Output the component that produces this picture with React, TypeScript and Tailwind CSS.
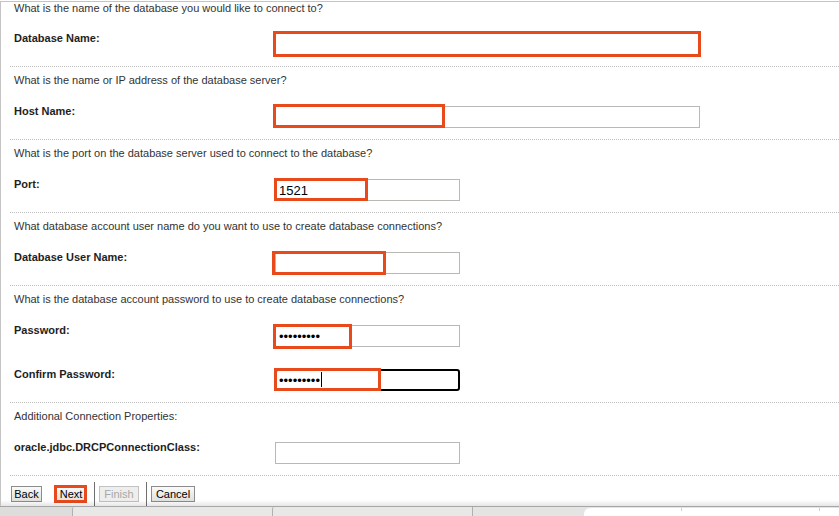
import React from "react"

type Field = {
  label: string
  wide?: boolean
  value?: string
  type?: string
  focused?: boolean
  hl?: string
  gap?: boolean
}

type Section = {
  question: string
  fields: Field[]
}

const sections: Section[] = [
  {
    question: "What is the name of the database you would like to connect to?",
    fields: [{ label: "Database Name:", wide: true, hl: "-left-[2px] -top-[2px] w-[428px] h-[26px]" }],
  },
  {
    question: "What is the name or IP address of the database server?",
    fields: [{ label: "Host Name:", wide: true, hl: "-left-[2px] -top-[2px] w-[172px] h-[24px]" }],
  },
  {
    question: "What is the port on the database server used to connect to the database?",
    fields: [{ label: "Port:", value: "1521", hl: "-left-[1px] -top-[1px] w-[94px] h-[23px]" }],
  },
  {
    question: "What database account user name do you want to use to create database connections?",
    fields: [{ label: "Database User Name:", hl: "-left-[3px] -top-[1px] w-[114px] h-[24px]" }],
  },
  {
    question: "What is the database account password to use to create database connections?",
    fields: [
      { label: "Password:", type: "password", value: "123456789", hl: "-left-[2px] -top-[1px] w-[79px] h-[25px]" },
      {
        label: "Confirm Password:",
        type: "password",
        value: "123456789",
        focused: true,
        gap: true,
        hl: "-left-[1px] -top-[1px] w-[107px] h-[23px]",
      },
    ],
  },
  {
    question: "Additional Connection Properties:",
    fields: [{ label: "oracle.jdbc.DRCPConnectionClass:" }],
  },
]

function FieldRow({ f }: { f: Field }) {
  return (
    <div className={`grid grid-cols-[261px_1fr] ${f.gap ? "mt-[22px]" : ""}`}>
      <div className="text-[11px] leading-[11px] font-bold text-[#1e1e1e]">{f.label}</div>
      <div className={`relative h-[22px] ${f.wide ? "w-[425px]" : "w-[185px]"}`}>
        <input
          readOnly
          type={f.type || "text"}
          value={f.value || ""}
          className={
            f.focused
              ? "block w-full h-full border-2 border-black rounded-[3px] pl-[2px] text-[13px] text-black outline-none bg-white"
              : "block w-full h-full border border-[#b8b8b4] pl-[3px] text-[13px] text-black outline-none bg-white"
          }
        />
        {f.focused && <span className="absolute left-[46px] top-[3px] w-px h-[15px] bg-black" />}
        {f.hl && <span className={`absolute border-[3px] border-[#e84a1c] pointer-events-none ${f.hl}`} />}
      </div>
    </div>
  )
}

const btn =
  "block h-[16px] border border-[#8c8c8c] bg-linear-to-b from-[#fafaf8] to-[#e0e0dc] text-[11px] leading-[14px] text-black"

export default function App() {
  return (
    <div className="h-[516px] w-full bg-white pt-px flex flex-col overflow-hidden font-['Liberation_Sans',Arial,sans-serif]">
      <div className="relative flex-1 border-l border-t border-[#c4c4c4] flex flex-col">
        <div className="ml-[9px]">
          {sections.map((s, i) => (
            <div
              key={i}
              className={
                i === 0
                  ? "-mt-[1px] px-[4px] pb-[11px]"
                  : "border-t border-dotted border-[#bdbdbd] px-[4px] pt-[6px] pb-[11px]"
              }
            >
              <div className="text-[11px] leading-[14px] text-[#333]">{s.question}</div>
              <div className={i === 0 ? "mt-[18px]" : "mt-[19px]"}>
                {s.fields.map((f) => (
                  <FieldRow key={f.label} f={f} />
                ))}
              </div>
            </div>
          ))}

          {/* wizard buttons */}
          <div className="border-t border-dotted border-[#bdbdbd] pt-[6px] flex items-start">
            <button className={`ml-px mt-[4px] w-[31px] ${btn}`}>Back</button>
            <div className="relative ml-[14px] mt-[4px]">
              <button className={`w-[30px] ${btn}`}>Next</button>
              <span className="absolute -left-[2px] -top-[1px] w-[33px] h-[18px] border-[3px] border-[#e84a1c]" />
            </div>
            <div className="ml-[8px] w-px h-[24px] bg-[#6f6f6f]" />
            <button
              disabled
              className="block ml-[4px] mt-[4px] w-[40px] h-[16px] border border-[#c2c2c2] bg-[#eeeeec] text-[11px] leading-[14px] text-[#a8a8a8]"
            >
              Finish
            </button>
            <div className="ml-[7px] w-px h-[24px] bg-[#6f6f6f]" />
            <button className={`ml-[4px] mt-[4px] w-[44px] ${btn}`}>Cancel</button>
          </div>
        </div>
        <div className="pointer-events-none absolute left-0 right-0 bottom-0 h-[6px] bg-linear-to-b from-transparent to-black/10" />
      </div>

      {/* tab strip */}
      <div className="h-[10px] border-t border-[#a6a6a6] flex bg-[#e4e4e2]">
        <div className="w-[72px] bg-[#dddddb]" />
        <div className="w-[200px] border-l border-[#b0b0b0] rounded-tl-[2px] bg-[#e8e8e6]" />
        <div className="w-[200px] border-l border-[#b0b0b0] rounded-tl-[2px] bg-[#e8e8e6]" />
        <div className="w-[112px] border-l border-[#b0b0b0] bg-[#e4e4e2]" />
        <div className="relative flex-1 bg-white rounded-tl-[6px] mt-px">
          <span className="absolute left-[97px] top-0 w-px h-[3px] bg-[#cfcfcf]" />
          <span className="absolute left-[235px] top-0 w-px h-[3px] bg-[#cfcfcf]" />
        </div>
      </div>
    </div>
  )
}
